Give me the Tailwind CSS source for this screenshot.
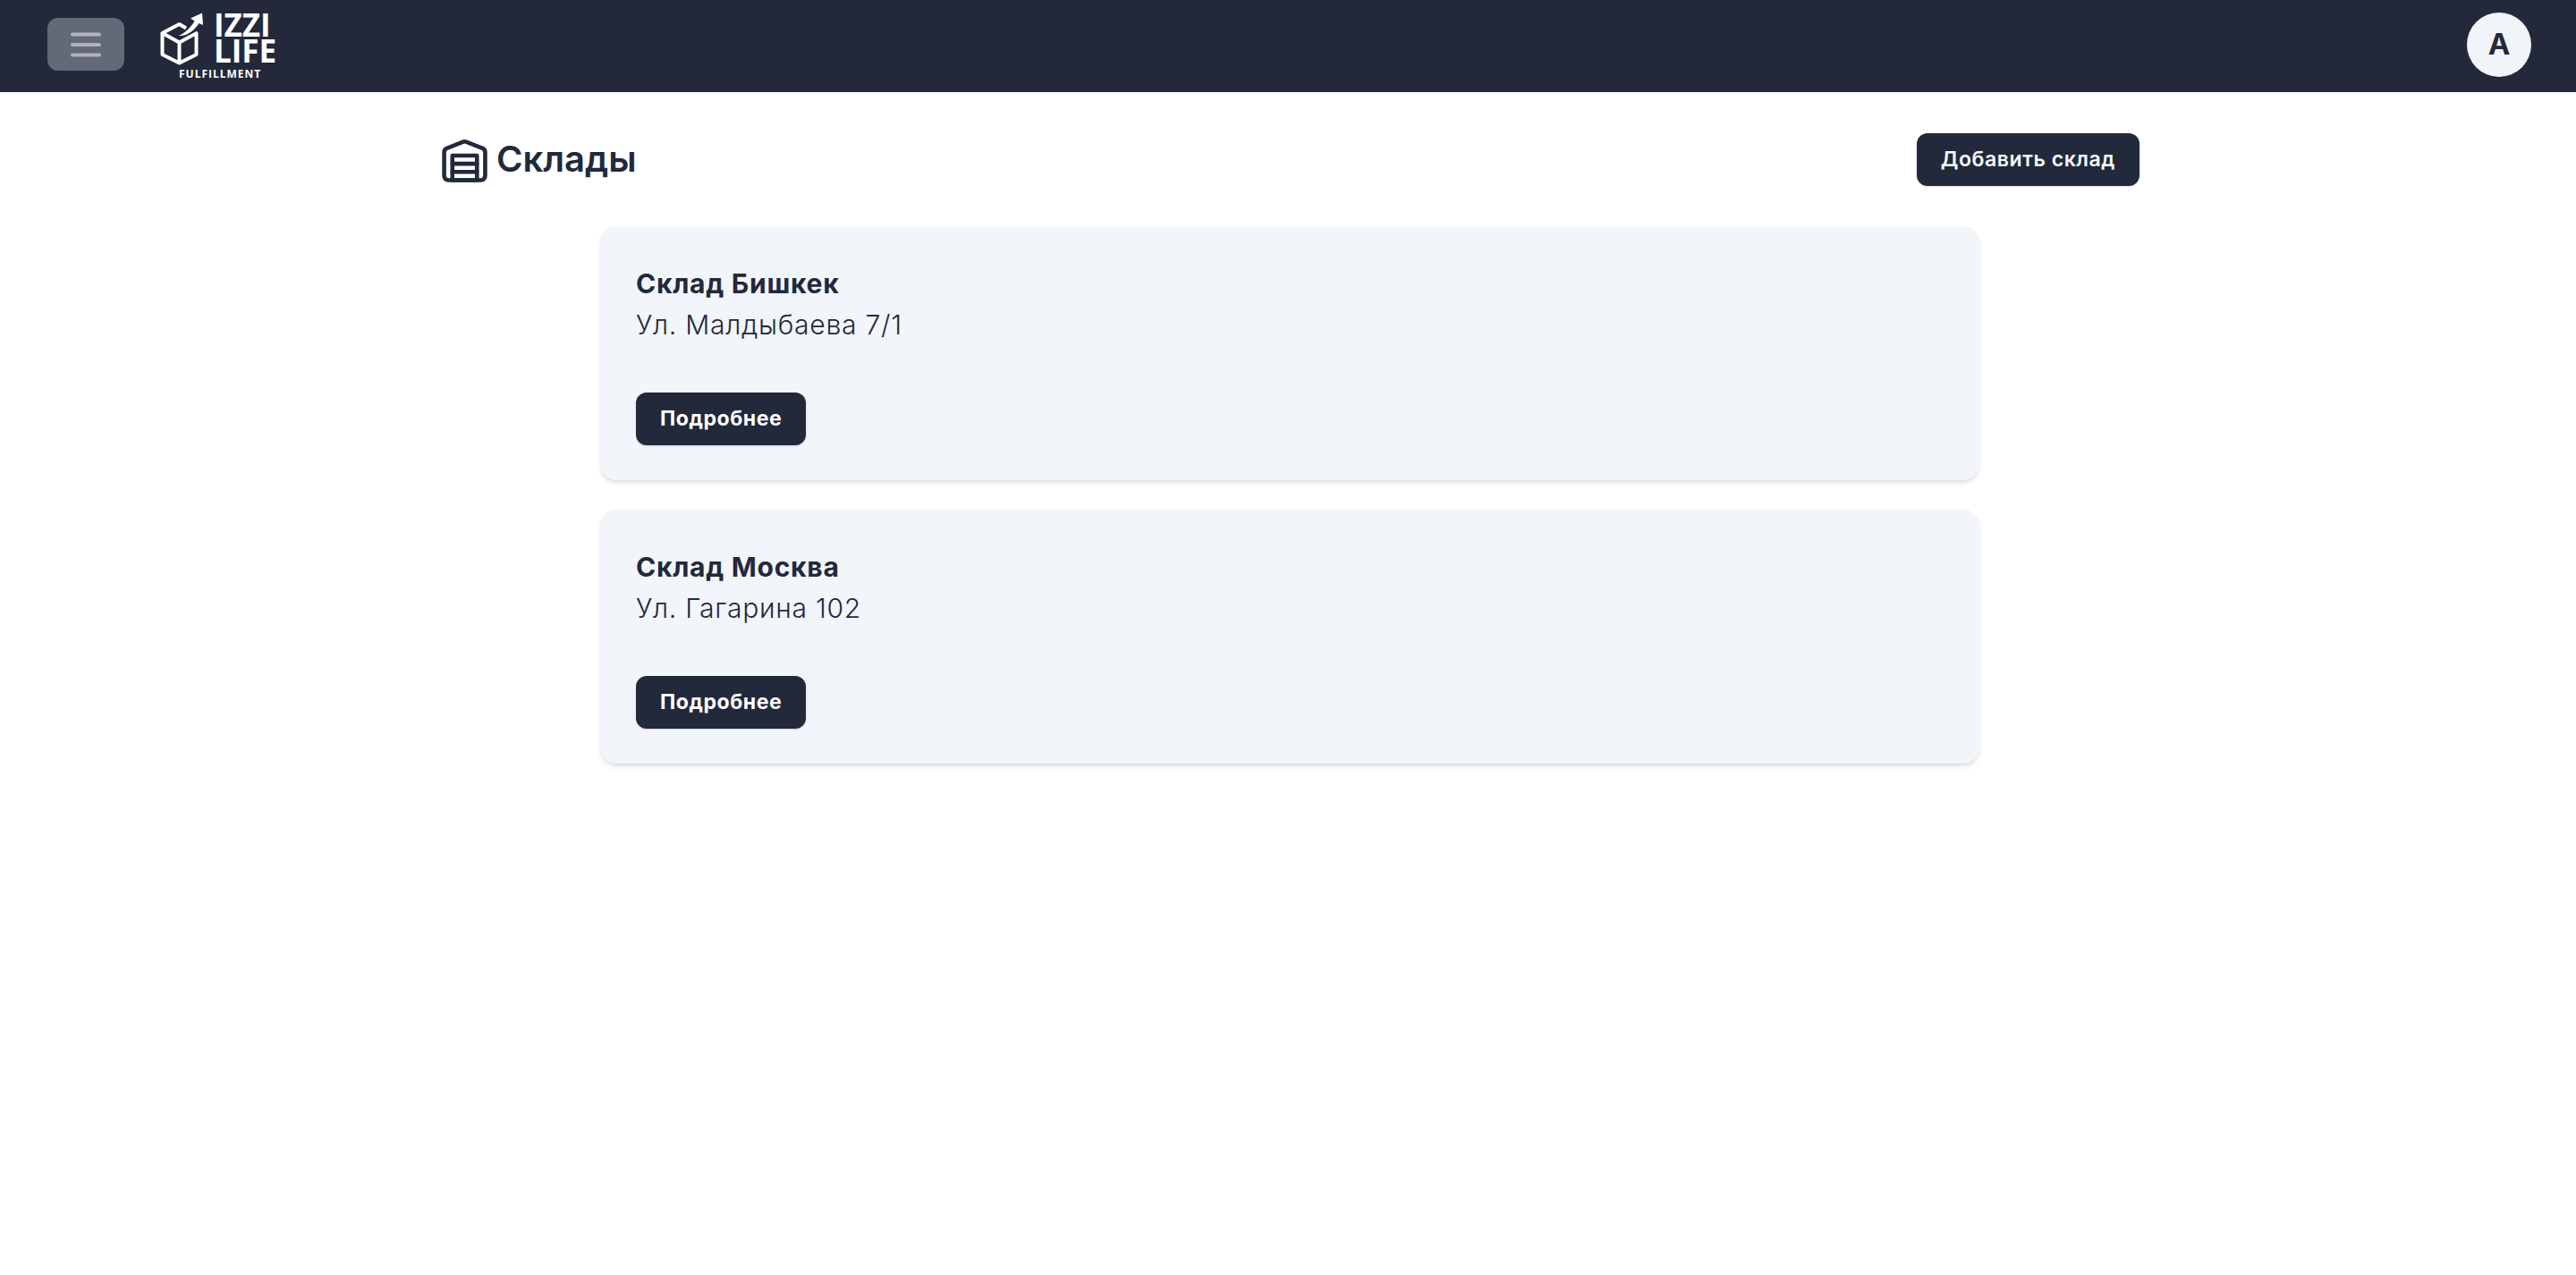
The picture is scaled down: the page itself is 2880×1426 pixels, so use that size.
<!DOCTYPE html>
<html lang="ru">
<head>
<meta charset="utf-8">
<meta name="viewport" content="width=device-width, initial-scale=1">
<title>Склады</title>
<script src="https://cdn.jsdelivr.net/npm/@tailwindcss/browser@4"></script>
</head>
<body class="min-h-screen bg-white font-['Inter',sans-serif] text-[#22293b]">
<header class="flex items-start justify-between bg-[#23293b] pr-[50px] pl-[53px]">
  <div class="flex items-start">
    <button type="button" aria-label="Меню" class="mt-5 flex h-[59px] w-[86px] items-center justify-center rounded-xl bg-[#636977]">
      <svg width="34" height="28" viewBox="0 0 34 28" fill="none" stroke="#b0b4be" stroke-width="4" stroke-linecap="round" aria-hidden="true"><path d="M2 2.5h30M2 14h30M2 25.500h30"/></svg>
    </button>
    <a href="#" aria-label="IZZI LIFE Fulfillment" class="ml-8">
      <svg class="overflow-visible" width="144" height="103" viewBox="171 0 144 103" fill="#fff" aria-hidden="true">
        <path d="M208 31.500 200.500 27 181.500 37v24L200.500 70.500 219.500 61V37L200.500 47.500 181.500 37M200.500 47.500V70.500" fill="none" stroke="#fff" stroke-width="4" stroke-linejoin="round"/>
        <path d="M202 40C208 37.500 215 35 221 30" fill="none" stroke="#23293b" stroke-width="6"/>
        <path d="M199.500 40C206 37.500 213 31.500 217.500 23.500L213 20.500 226 14.500 227 28 222.500 26C217.500 34 209 41 199.500 40Z"/>
        <text x="239" y="41" font-family="Open Sans" font-weight="700" font-size="35">IZZI</text>
        <text x="239" y="70" font-family="Open Sans" font-weight="700" font-size="35">LIFE</text>
        <text x="200" y="87" font-family="Open Sans" font-weight="700" font-size="12" letter-spacing="1">FULFILLMENT</text>
      </svg>
    </a>
  </div>
  <button type="button" aria-label="Профиль" class="mt-[14px] size-[72px] rounded-full bg-[#f1f5fa] text-[33px] font-bold">A</button>
</header>
<main class="pt-[42px] pl-1">
  <div class="mx-auto flex max-w-[1900px] items-center justify-between">
    <h1 class="flex items-center gap-2 text-[40px] leading-[66px] font-semibold">
      <svg class="size-[55px]" viewBox="0 0 24 24" fill="none" stroke="currentColor" stroke-width="2" stroke-linecap="round" stroke-linejoin="round" aria-hidden="true"><path d="M22 8.350V20a2 2 0 0 1-2 2H4a2 2 0 0 1-2-2V8.350A2 2 0 0 1 3.260 6.500l8-3.200a2 2 0 0 1 1.480 0l8 3.200A2 2 0 0 1 22 8.350Z"/><path d="M6 18h12M6 14h12"/><rect width="12" height="12" x="6" y="10"/></svg>
      Склады
    </h1>
    <button type="button" class="h-[59px] rounded-xl bg-[#22293b] px-[27px] text-[23px] font-semibold tracking-wide text-[#f5f8fd] shadow-sm">Добавить склад</button>
  </div>
  <ul class="mx-auto mt-[42px] flex max-w-[1542px] flex-col gap-[33px]">
    <li class="rounded-[18px] bg-[#f2f5fa] px-10 pt-[41px] pb-[39px] shadow-md">
      <h2 class="text-[30px] leading-[46px] font-bold tracking-wide">Склад Бишкек</h2>
      <p class="text-[30px] leading-[46px] font-light tracking-wide">Ул. Малдыбаева 7/1</p>
      <button type="button" class="mt-[53px] block h-[59px] rounded-xl bg-[#22293b] px-[27px] text-[23px] font-bold tracking-wide text-white shadow-sm">Подробнее</button>
    </li>
    <li class="rounded-[18px] bg-[#f2f5fa] px-10 pt-[41px] pb-[39px] shadow-md">
      <h2 class="text-[30px] leading-[46px] font-bold tracking-wide">Склад Москва</h2>
      <p class="text-[30px] leading-[46px] font-light tracking-wide">Ул. Гагарина 102</p>
      <button type="button" class="mt-[53px] block h-[59px] rounded-xl bg-[#22293b] px-[27px] text-[23px] font-bold tracking-wide text-white shadow-sm">Подробнее</button>
    </li>
  </ul>
</main>
</body>
</html>
